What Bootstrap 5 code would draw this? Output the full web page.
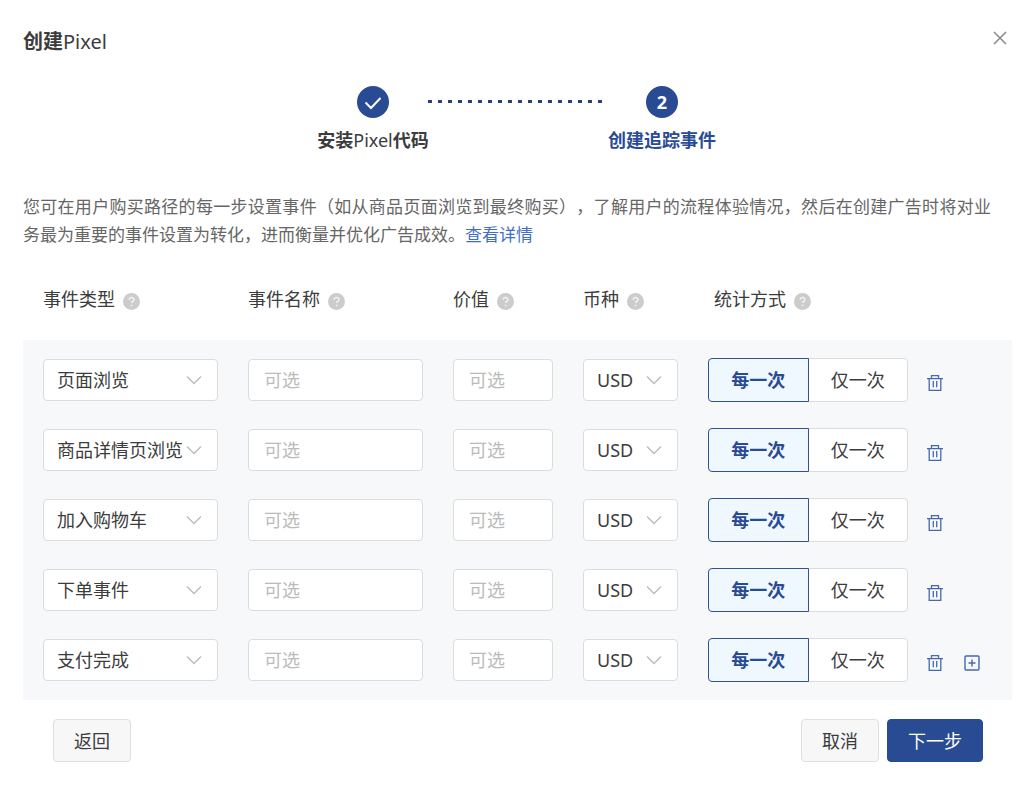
<!DOCTYPE html>
<html lang="zh-CN">
<head>
<meta charset="utf-8">
<meta name="viewport" content="width=device-width, initial-scale=1">
<title>创建Pixel</title>
<link href="https://cdn.jsdelivr.net/npm/bootstrap@5.3.0/dist/css/bootstrap.min.css" rel="stylesheet">
<style>
  :root { --brand: #294b93; --line: #dcdcdc; --ink: #3c3c3c; }
  body { font-family: "Noto Sans", "Noto Sans CJK SC", sans-serif; font-size: 18px; line-height: 28px; color: var(--ink); background: #fff; }
  .dialog-page { padding: 24px 24px 40px 23px; }
  .dialog-title { font-size: 20px; line-height: 36px; font-weight: 700; margin: 0; }
  .latin { font-weight: 400; }
  .icon-btn { border: 0; background: none; padding: 0; line-height: 0; color: #4568b0; }
  .close-btn { width: 24px; height: 28px; color: #8c8c8c; }
  .steps { margin-top: 26px; font-weight: 700; }
  .step-item { width: 110px; white-space: nowrap; }
  .step-dot { width: 32px; height: 32px; border-radius: 50%; background: var(--brand); color: #fff; margin-bottom: 8px; }
  .step-item.current { color: var(--brand); }
  .step-line { width: 174px; height: 3px; margin: 14px 5px 0 0; background: repeating-linear-gradient(90deg, #2a3f7c 0 4px, transparent 4px 10px); }
  .intro { margin: 39px 0 0; padding-right: 21px; font-size: 17px; color: #666; text-align: justify; text-spacing-trim: space-all; }
  .intro a { color: #3f6fc4; text-decoration: none; }
  .event-row { display: grid; grid-template-columns: 175fr 175fr 100fr 95fr 284fr; column-gap: 30px; align-items: center; }
  .event-head { padding: 0 20px; margin-top: 36px; white-space: nowrap; }
  .event-head svg { margin-left: 3px; }
  .event-head .mode-head { padding-left: 6px; }
  .event-panel { background: #f7f8fa; margin-top: 27px; padding: 18px 20px; row-gap: 26px; }
  .field { width: 100%; height: 42px; border: 1px solid var(--line); border-radius: 4px; font-size: 18px; line-height: 28px; color: var(--ink); padding: 6px 15px; }
  .field::placeholder { color: #bbb; }
  select.field { padding: 6px 30px 6px 13px; background-size: 16px 10px; background-position: right 15px center;
    background-image: url("data:image/svg+xml,%3Csvg xmlns='http://www.w3.org/2000/svg' viewBox='0 0 16 10'%3E%3Cpath d='M1 1.5l7 7 7-7' fill='none' stroke='%23bbb' stroke-width='1.3'/%3E%3C/svg%3E"); }
  .mode-group { width: 200px; }
  .mode-group .btn { width: 100px; height: 44px; padding: 7px 0; font-size: 18px; line-height: 28px; color: var(--ink); background: #fff; border: 1px solid var(--line); border-radius: 4px; }
  .mode-group .btn-check:checked + .btn { color: var(--brand); background: #f0f8ff; border-color: #33518f; font-weight: 700; }
  .row-tools { margin-left: 19px; gap: 21px; padding-top: 5px; }
  .actions { padding: 19px 29px 0 30px; }
  .actions .btn { height: 43px; padding: 6px 20px; font-size: 18px; line-height: 28px; border-radius: 4px; }
  .btn-plain, .btn-plain:hover { color: var(--ink); background: #f7f7f8; border-color: #dfdfe1; }
  .btn-brand, .btn-brand:hover { color: #fff; background: var(--brand); border-color: var(--brand); }
</style>
</head>
<body>
<svg class="d-none" aria-hidden="true">
  <symbol id="help" viewBox="0 0 16 16"><circle cx="8" cy="8" r="8" fill="#ccc"/><path d="M5.8 6.4c0-3 4.6-2.8 4.5-.1 0 1.6-2.2 1.6-2.2 3.2M8.1 11v1.5" fill="none" stroke="#f4f4f4" stroke-width="1.4"/></symbol>
  <symbol id="trash" viewBox="0 0 16 16"><path d="M0 3.6h16M4.5 3.4V.7h7v2.7M2.2 3.6v11.7h11.6V3.6M6.3 6v6.3M9.7 6v6.3" fill="none" stroke="currentColor" stroke-width="1.3"/></symbol>
  <symbol id="plus" viewBox="0 0 16 16"><rect x="1" y="1" width="14" height="14" rx="1" fill="none" stroke="currentColor" stroke-width="1.4"/><path d="M8 4.5v7M4.5 8h7" fill="none" stroke="currentColor" stroke-width="1.4"/></symbol>
</svg>
<main class="dialog-page">
  <header class="d-flex justify-content-between align-items-start">
    <h1 class="dialog-title">创建<span class="latin">Pixel</span></h1>
    <button type="button" class="icon-btn close-btn" aria-label="关闭"><svg width="14" height="14" viewBox="0 0 14 14"><path d="M1 1l12 12M13 1L1 13" fill="none" stroke="currentColor" stroke-width="1.6"/></svg></button>
  </header>

  <div class="steps d-flex justify-content-center align-items-start">
    <div class="step-item d-flex flex-column align-items-center">
      <div class="step-dot d-flex align-items-center justify-content-center"><svg width="20" height="16" viewBox="0 0 20 16"><path d="M2.5 8.5l5.5 5.5L17.5 4" fill="none" stroke="#fff" stroke-width="2"/></svg></div>
      <div>安装<span class="latin">Pixel</span>代码</div>
    </div>
    <div class="step-line"></div>
    <div class="step-item current d-flex flex-column align-items-center">
      <div class="step-dot d-flex align-items-center justify-content-center">2</div>
      <div>创建追踪事件</div>
    </div>
  </div>

  <p class="intro">您可在用户购买路径的每一步设置事件（如从商品页面浏览到最终购买），了解用户的流程体验情况，然后在创建广告时将对业务最为重要的事件设置为转化，进而衡量并优化广告成效。<a href="#">查看详情</a></p>

  <form>
    <div class="event-row event-head">
      <div>事件类型 <svg width="17" height="17"><use href="#help"/></svg></div>
      <div>事件名称 <svg width="17" height="17"><use href="#help"/></svg></div>
      <div>价值 <svg width="17" height="17"><use href="#help"/></svg></div>
      <div>币种 <svg width="17" height="17"><use href="#help"/></svg></div>
      <div class="mode-head">统计方式 <svg width="17" height="17"><use href="#help"/></svg></div>
    </div>
    <div class="event-panel d-grid" id="events"></div>
    <div class="actions d-flex">
      <button type="button" class="btn btn-plain me-auto">返回</button>
      <button type="button" class="btn btn-plain">取消</button>
      <button type="button" class="btn btn-brand ms-2">下一步</button>
    </div>
  </form>
</main>
<script src="https://cdn.jsdelivr.net/npm/bootstrap@5.3.0/dist/js/bootstrap.bundle.min.js"></script>
<script>
  const types = ['页面浏览', '商品详情页浏览', '加入购物车', '下单事件', '支付完成'];
  document.getElementById('events').innerHTML = types.map((type, i) => `
    <div class="event-row">
      <select class="form-select field" aria-label="事件类型"><option>${type}</option></select>
      <input class="form-control field" type="text" placeholder="可选" aria-label="事件名称">
      <input class="form-control field" type="text" placeholder="可选" aria-label="价值">
      <select class="form-select field" aria-label="币种"><option>USD</option></select>
      <div class="d-flex align-items-center">
        <div class="btn-group mode-group flex-shrink-0" role="group" aria-label="统计方式">
          <input class="btn-check" type="radio" name="mode${i}" id="every${i}" checked>
          <label class="btn" for="every${i}">每一次</label>
          <input class="btn-check" type="radio" name="mode${i}" id="once${i}">
          <label class="btn" for="once${i}">仅一次</label>
        </div>
        <div class="row-tools d-flex">
          <button type="button" class="icon-btn" aria-label="删除"><svg width="16" height="16"><use href="#trash"/></svg></button>
          ${i === types.length - 1 ? '<button type="button" class="icon-btn" aria-label="添加"><svg width="16" height="16"><use href="#plus"/></svg></button>' : ''}
        </div>
      </div>
    </div>`).join('');
</script>
</body>
</html>
